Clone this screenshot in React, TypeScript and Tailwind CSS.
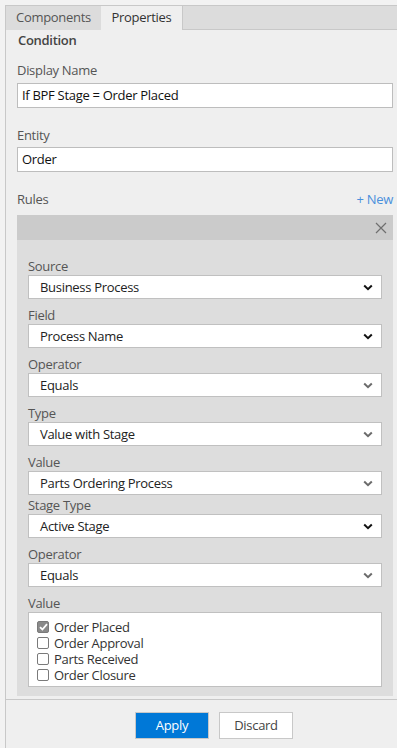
import React from "react";

type SelectRow = {
  label: string;
  value: string;
  dark?: boolean;
  tight?: boolean;
};

const rows: SelectRow[] = [
  { label: "Source", value: "Business Process", dark: true },
  { label: "Field", value: "Process Name", dark: true },
  { label: "Operator", value: "Equals" },
  { label: "Type", value: "Value with Stage" },
  { label: "Value", value: "Parts Ordering Process" },
  { label: "Stage Type", value: "Active Stage", dark: true, tight: true },
  { label: "Operator", value: "Equals" },
];

const stages = [
  { name: "Order Placed", checked: true },
  { name: "Order Approval", checked: false },
  { name: "Parts Received", checked: false },
  { name: "Order Closure", checked: false },
];

function Chevron({ dark }: { dark?: boolean }) {
  return (
    <svg width="10" height="7" viewBox="0 0 10 7" className="shrink-0">
      <path
        d="M1.2 1.5 5 5.2 8.8 1.5"
        fill="none"
        stroke={dark ? "#111" : "#6b6b6b"}
        strokeWidth="2"
      />
    </svg>
  );
}

function FakeSelect({ row, first }: { row: SelectRow; first: boolean }) {
  return (
    <div className={first ? "" : row.tight ? "mt-[2px]" : "mt-[8px]"}>
      <div className="h-[17px] text-[13px] leading-[17px] text-[#555]">{row.label}</div>
      <div className="flex h-[24px] items-center justify-between border border-[#c0c0c0] bg-white pl-[11px] pr-[8px]">
        <span className="text-[13px] leading-[18px] text-[#222]">{row.value}</span>
        <Chevron dark={row.dark} />
      </div>
    </div>
  );
}

function Check({ on }: { on: boolean }) {
  return (
    <span
      className={
        "flex h-[12px] w-[12px] shrink-0 items-center justify-center rounded-[2px] border " +
        (on ? "border-[#7a7a7a] bg-[#8a8a8a]" : "border-[#7a7a7a] bg-white")
      }
    >
      {on && (
        <svg width="9" height="8" viewBox="0 0 9 8">
          <path d="M1 4.2 3.4 6.5 8 1.2" fill="none" stroke="#fff" strokeWidth="1.8" />
        </svg>
      )}
    </span>
  );
}

export default function App() {
  return (
    <div
      className="h-[748px] w-[397px] overflow-hidden bg-[#f2f2f2] pt-[5px] tracking-[-0.3px] text-[#333]"
      style={{ fontFamily: '"Open Sans", "Noto Sans", sans-serif' }}
    >
      <div className="ml-[5px] flex h-[743px] flex-col border-l border-t border-[#c8c8c8] bg-[#efefef]">
        {/* tabs */}
        <div className="flex h-[24px] shrink-0 text-[13px]">
          <div className="flex w-[95px] items-center justify-center bg-[#dcdcdc] text-[#555]">
            Components
          </div>
          <div className="flex w-[82px] items-center justify-center border-r border-[#c8c8c8] bg-[#efefef] text-[#333]">
            Properties
          </div>
          <div className="flex-1 border-b border-[#c8c8c8] bg-[#dcdcdc]" />
        </div>

        <div className="flex-1 overflow-hidden pl-[11px] pr-[4px]">
          <div className="mt-[1px] pl-[1px] text-[13px] font-semibold leading-[18px] text-[#444]">
            Condition
          </div>

          <div className="mt-[12px] h-[18px] text-[13px] leading-[18px] text-[#555]">Display Name</div>
          <div className="mt-[4px] flex h-[25px] items-center border border-[#bdbdbd] bg-white px-[4px] text-[13px] text-[#111]">
            If BPF Stage = Order Placed
          </div>

          <div className="mt-[18px] h-[18px] text-[13px] leading-[18px] text-[#555]">Entity</div>
          <div className="mt-[3px] flex h-[25px] items-center border border-[#bdbdbd] bg-white px-[4px] text-[13px] text-[#111]">
            Order
          </div>

          <div className="mt-[18px] flex h-[18px] items-center justify-between text-[13px] leading-[18px]">
            <span className="text-[#555]">Rules</span>
            <span className="text-[#4a90dc]">+ New</span>
          </div>

          <div className="mt-[7px]">
            <div className="flex h-[25px] items-center justify-end bg-[#cbcbcb] pr-[6px]">
              <svg width="12" height="12" viewBox="0 0 12 12">
                <path d="M1 1 11 11M11 1 1 11" stroke="#6f6f6f" strokeWidth="1.2" fill="none" />
              </svg>
            </div>
            <div className="bg-[#dddddd] px-[11px] pb-[9px] pt-[18px]">
              {rows.map((r, i) => (
                <FakeSelect key={i} row={r} first={i === 0} />
              ))}

              <div className="mt-[8px]">
                <div className="h-[17px] text-[13px] leading-[17px] text-[#555]">Value</div>
                <div className="flex h-[75px] flex-col border border-[#c0c0c0] bg-white pl-[8px] pt-[6px]">
                  {stages.map((s) => (
                    <label
                      key={s.name}
                      className="flex h-[16px] items-center gap-[5px] text-[13px] leading-[16px] text-[#333]"
                    >
                      <Check on={s.checked} />
                      {s.name}
                    </label>
                  ))}
                </div>
              </div>
            </div>
          </div>
        </div>

        {/* footer */}
        <div className="flex h-[49px] shrink-0 gap-[10px] border-t border-[#c8c8c8] bg-[#efefef] pl-[129px] pt-[12px]">
          <button className="h-[27px] w-[74px] border border-[#c8c8c8] bg-[#0078d7] text-[13px] text-white">
            Apply
          </button>
          <button className="h-[27px] w-[74px] border border-[#c8c8c8] bg-white text-[13px] text-[#444]">
            Discard
          </button>
        </div>
      </div>
    </div>
  );
}
